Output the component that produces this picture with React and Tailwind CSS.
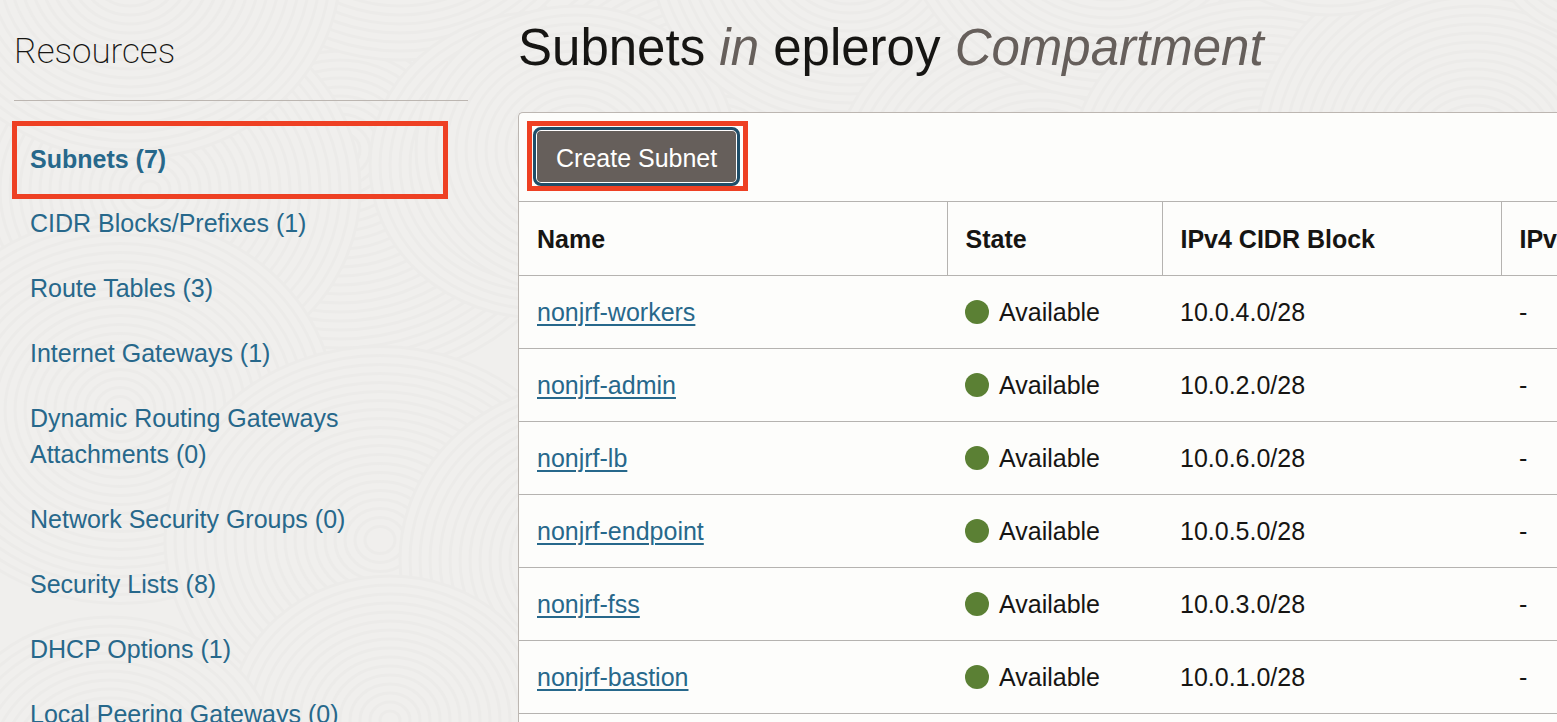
const resources = [
  'Subnets (7)',
  'CIDR Blocks/Prefixes (1)',
  'Route Tables (3)',
  'Internet Gateways (1)',
  'Dynamic Routing Gateways Attachments (0)',
  'Network Security Groups (0)',
  'Security Lists (8)',
  'DHCP Options (1)',
  'Local Peering Gateways (0)',
];

const subnets = [
  ['nonjrf-workers', '10.0.4.0/28'],
  ['nonjrf-admin', '10.0.2.0/28'],
  ['nonjrf-lb', '10.0.6.0/28'],
  ['nonjrf-endpoint', '10.0.5.0/28'],
  ['nonjrf-fss', '10.0.3.0/28'],
  ['nonjrf-bastion', '10.0.1.0/28'],
];

// Horizontal and vertical centre and radius of the overlapping ripples, painted back to front.
const ripples = [
  [340, 150, 260], [-60, 260, 260], [400, -120, 200], [150, 190, 210], [130, -30, 210],
  [540, 165, 170], [120, 410, 215], [380, 540, 215], [600, 560, 200], [390, 720, 160],
  [110, 770, 170], [720, 150, 220], [576, 150, 160], [850, -50, 200], [1040, 190, 210],
  [1110, -90, 210], [1260, 170, 190], [1475, 150, 220], [1330, -120, 150], [1600, -60, 110],
];

function Ripples() {
  return (
    <svg className="absolute inset-0 h-full w-full" aria-hidden="true">
      {ripples.map(([cx, cy, r]) => (
        <g key={`${cx}-${cy}`} fill="#f0efed" stroke="#ecebe9" strokeWidth="3">
          {Array.from({ length: Math.floor(r / 10) }, (_, i) => (
            <ellipse key={i} cx={cx} cy={cy} rx={r - i * 10} ry={(r - i * 10) * 0.9} />
          ))}
        </g>
      ))}
    </svg>
  );
}

export default function App() {
  return (
    <div className="relative h-screen overflow-hidden bg-[#f0efed] font-['Liberation_Sans',Arial,sans-serif] text-[25px] leading-9 text-[#161513]">
      <Ripples />
      <div className="relative flex">
        <aside className="w-[518px] shrink-0 pl-[14px] pr-[50px] pt-8">
          <h2 className="border-b border-[#bcb6b1] pb-7 font-['Roboto',sans-serif] text-[35px] font-extralight leading-10">Resources</h2>
          <nav className="-ml-[2px] mr-5 mt-5">
            <ul>
              {resources.map((label, i) => (
                <li key={label} className="first:-mb-2">
                  <a
                    href="#"
                    className={
                      i === 0
                        ? 'block border-5 border-[#ee4023] px-[13px] pb-4 pt-[14px] font-bold leading-[38px] text-[#27688b]'
                        : 'block pb-[15px] pl-[18px] pr-16 pt-[14px] leading-9 text-[#27688b]'
                    }
                  >
                    {label}
                  </a>
                </li>
              ))}
            </ul>
          </nav>
        </aside>

        <main className="min-w-0 flex-1 pt-[18px]">
          <h1 className="whitespace-nowrap text-[51px] leading-[60px]">
            Subnets <em className="text-[#665f5b]">in</em> epleroy <em className="text-[#665f5b]">Compartment</em>
          </h1>
          <section className="mt-[34px] overflow-hidden rounded-tl-[5px] border-l border-t border-[#bcb6b1] bg-[#fdfdfb]">
            <div className="flex h-[88px] items-start pl-2 pt-2">
              <div className="border-5 border-[#ee4023] pl-px pr-[3px] pt-px">
                <button
                  type="button"
                  className="block h-[59px] rounded-lg border-3 border-[#1f4e69] bg-[#665f5b] px-5 pt-[2px] text-white ring-1 ring-inset ring-white"
                >
                  Create Subnet
                </button>
              </div>
            </div>
            <table className="w-[1160px] table-fixed border-collapse text-left">
              <colgroup>
                <col className="w-[428px]" />
                <col className="w-[215px]" />
                <col className="w-[339px]" />
                <col />
              </colgroup>
              <thead>
                <tr className="h-[74px] border-y border-[#b5b3b0]">
                  {['Name', 'State', 'IPv4 CIDR Block', 'IPv6 Prefixes'].map((h) => (
                    <th key={h} className="whitespace-nowrap border-r border-[#b5b3b0] px-[18px] font-bold last:border-r-0">{h}</th>
                  ))}
                </tr>
              </thead>
              <tbody>
                {subnets.map(([name, cidr]) => (
                  <tr key={name} className="h-[73px] border-b border-[#b5b3b0]">
                    <td className="px-[18px]">
                      <a href="#" className="text-[#27688b] underline decoration-2 underline-offset-3">{name}</a>
                    </td>
                    <td className="px-[18px]">
                      <span className="flex items-center gap-[10px]">
                        <span className="size-6 rounded-full bg-[#5b8034]" />
                        Available
                      </span>
                    </td>
                    <td className="px-[18px]">{cidr}</td>
                    <td className="px-[18px]">-</td>
                  </tr>
                ))}
              </tbody>
            </table>
            <div className="h-12" />
          </section>
        </main>
      </div>
    </div>
  );
}
